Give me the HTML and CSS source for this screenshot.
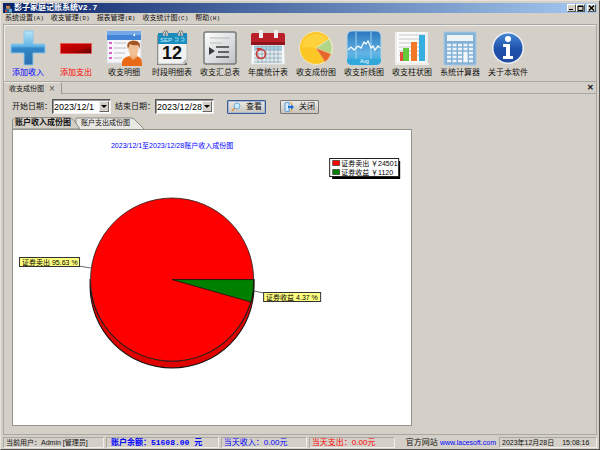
FILE: index.html
```html
<!DOCTYPE html>
<html lang="zh-CN">
<head>
<meta charset="utf-8">
<title>影子家庭记账系统V2.7</title>
<link rel="stylesheet" href="styles.css">
</head>
<body>
<div class="window">
  <header class="titlebar">
    <svg class="app-icon" viewBox="0 0 9 9" aria-hidden="true"><path d="M1 9V5l2-1h3l2 1v4z" fill="#30608c"/><circle cx="4" cy="3" r="2" fill="#d08850"/><path d="M2 2q2-3 5 0z" fill="#342d2b"/><path d="M5 5h3v3H5z" fill="#72a8c8"/><path d="M1 6h2v2H1z" fill="#b83b2a"/></svg>
    <h1>影子家庭记账系统V2.7</h1>
    <div class="window-buttons">
      <button type="button" aria-label="最小化"><svg viewBox="0 0 7 6"><path d="M1 4.500h4" stroke="#000"/></svg></button>
      <button type="button" aria-label="最大化"><svg viewBox="0 0 7 6"><path d="M1 1h5v4.500h-5zM1 1.500h5" fill="none" stroke="#000"/></svg></button>
      <button type="button" class="close" aria-label="关闭窗口"><svg viewBox="0 0 7 6"><path d="M1 .5l5 5M6 .5l-5 5" stroke="#000" stroke-width="1.300"/></svg></button>
    </div>
  </header>
  <nav class="menu">
    <button type="button">系统设置<span>(A)</span></button>
    <button type="button">收支管理<span>(D)</span></button>
    <button type="button">报表管理<span>(B)</span></button>
    <button type="button">收支统计图<span>(C)</span></button>
    <button type="button">帮助<span>(H)</span></button>
  </nav>
  <div class="toolbar">
    <button type="button" class="income">
      <svg viewBox="0 0 36 36"><defs><linearGradient id="blue" x2="0" y2="1"><stop stop-color="#b7e6fa"/><stop offset=".45" stop-color="#62b3e5"/><stop offset=".5" stop-color="#3288c9"/><stop offset="1" stop-color="#2b70ae"/></linearGradient></defs><path d="M14 1h9v13h12v9H23v12h-9V23H1v-9h13z" fill="url(#blue)" stroke="#8bc6e8"/></svg>
      <span>添加收入</span></button>
    <button type="button" class="expense">
      <svg viewBox="0 0 36 36"><defs><linearGradient id="redbar" x2="1" y2="1"><stop stop-color="#d90000"/><stop offset=".6" stop-color="#b00000"/><stop offset="1" stop-color="#500000"/></linearGradient></defs><path d="M2.500 13.500h31v10h-31z" fill="url(#redbar)" stroke="#eb5252" stroke-width=".8"/></svg>
      <span>添加支出</span></button>
    <button type="button">
      <svg viewBox="0 0 36 36"><path d="M1 1h34v32H1z" fill="#f7f7f9" stroke="#d3d8e2"/><path d="M1 1h34v9H1z" fill="#4384d6"/><path d="M1 1h34v4H1z" fill="#72a8e8"/><path d="M27 6l2-3v3z" fill="#fff"/><path d="M3 13h3M3 18h3M3 23h3M3 28h3" stroke="#cb2eba" stroke-width="1.500"/><path d="M8 13h12M8 18h12M8 23h11M8 28h8" stroke="#bcbcca"/><path d="M16 36v-4q1-5 8-6h6q6 1 6 7v3z" fill="#e86a17"/><path d="M24 23v4l3 3 4-3v-4z" fill="#efb27e"/><ellipse cx="27.500" cy="19" rx="5" ry="7" fill="#f2c096"/><path d="M22 19q-3-8 6-8.500 8 .5 5.500 8.500l-1.500-4q-5 1-8-1z" fill="#a45724"/></svg>
      <span>收支明细</span></button>
    <button type="button">
      <svg viewBox="0 0 36 36"><path d="M3 5h30v30H3z" fill="#666"/><path d="M4 4h29v28l-3 2H4z" fill="#f1f1f1" stroke="#bbb"/><path d="M4 3h29v11H4z" fill="#1b8dbd"/><text class="calendar-month" x="6" y="12">SEP</text><path d="M21 8h3v3h-3M27 8h3v3h-3" fill="none" stroke="#79d2ef"/><g fill="none" stroke="#777" stroke-width="2.500"><path d="M10 6V3q2-3 3 0v3M25 6V3q2-3 3 0v3"/></g><g fill="none" stroke="#eee"><path d="M10 6V3q2-3 3 0v3M25 6V3q2-3 3 0v3"/></g><text class="calendar-day" x="18" y="29" text-anchor="middle">12</text><path d="M28 33l5-5-1 5z" fill="#bbb"/></svg>
      <span>时段明细表</span></button>
    <button type="button">
      <svg viewBox="0 0 36 36"><defs><linearGradient id="paper" x2="1" y2="1"><stop stop-color="#fff"/><stop offset="1" stop-color="#bfc2c4"/></linearGradient></defs><rect x="2" y="2" width="32" height="32" rx="2" fill="url(#paper)" stroke="#777a7c" stroke-width="1.500"/><path d="M8 8h20M8 13h12" stroke="#b9b9b9"/><path d="M7 17l6 4-6 4z" fill="#36393b"/><path d="M14 17h13M16 22h11M14 27h13" stroke="#383b3d" stroke-width="1.500"/></svg>
      <span>收支汇总表</span></button>
    <button type="button">
      <svg viewBox="0 0 36 36"><path d="M2 13h32l1 21H1z" fill="#f8fafb" stroke="#ddd"/><path d="M4 17h28v16H4z" fill="#e1eaee"/><path d="M4 16h28v4H4z" fill="#a6d0e4"/><path d="M4 16h28M4 20h28M4 24h28M4 28h28M4 32h28M8 16v17M12 16v17M16 16v17M20 16v17M24 16v17M28 16v17" stroke="#8ba5b2" stroke-width=".7"/><path d="M1 5q0-2 2-2h30q2 0 2 2v10H1z" fill="#b82127"/><path d="M1 12h34v3H1z" fill="#8e151c"/><path d="M9 0h4v8H9zM24 0h4v8h-4z" fill="#eee"/><circle cx="11" cy="24" r="4.500" fill="none" stroke="#c83b36" stroke-width="1.700"/><path d="M6 18l6 0-3 3z" fill="#c83b36"/></svg>
      <span>年度统计表</span></button>
    <button type="button">
      <svg viewBox="0 0 36 36"><circle cx="18" cy="18" r="16.500" fill="#fcc725" stroke="#eee6cc"/><path d="M18 18L31 9q5 7 2 15z" fill="#b1d688" stroke="#e4edcd"/><path d="M18 18l15 6q-2 5-6 8z" fill="#e4662b" stroke="#f2b17d" stroke-width=".7"/><path d="M4 17Q5 5 18 4q7 0 11 4L18 18z" fill="#ffda50" opacity=".55"/></svg>
      <span>收支成份图</span></button>
    <button type="button">
      <svg viewBox="0 0 36 36"><defs><linearGradient id="chartblue" x2="0" y2="1"><stop stop-color="#2977bd"/><stop offset=".65" stop-color="#65b3e4"/><stop offset="1" stop-color="#25a8df"/></linearGradient></defs><rect x="1" y="1" width="34" height="34" rx="5" fill="url(#chartblue)" stroke="#afd8ec"/><path d="M10 2v28M25 2v28" stroke="#9bd5ef"/><path d="M2 20l3-3 3 3 4-4 3 2 3-6 2 2 2-3 3 7 2-2 2 4 3-4 2 2" fill="none" stroke="#fff" stroke-width="1.200"/><path d="M1 29h34v2q-1 4-5 4H6q-5 0-5-4z" fill="#32a7d9"/><text class="chart-month" x="14" y="33">Aug</text></svg>
      <span>收支折线图</span></button>
    <button type="button">
      <svg viewBox="0 0 36 36"><path d="M3 2h30v31H3z" fill="#fafafa"/><path d="M5 5h26M5 9h26M5 13h26M5 17h26M5 21h26M5 25h26" stroke="#c8c8c8"/><path d="M3 2v31h32v2H1V2zM31 2h3v30h-3z" fill="#eee"/><path d="M6 22h4v9H6z" fill="#e34d3c"/><path d="M9 18h6v13H9z" fill="#64c83c"/><path d="M17 12h6v19h-6z" fill="#f27a27"/><path d="M25 5h6v26h-6z" fill="#35afdf"/></svg>
      <span>收支柱状图</span></button>
    <button type="button">
      <svg viewBox="0 0 36 36"><path d="M2 2h32v33H2z" fill="#83b2d8" stroke="#a9c9e2"/><path d="M5 5h26v6H5z" fill="#eef3f6"/><g stroke="#edf3f7" stroke-width="2.500" stroke-dasharray="4 1.500"><path d="M5 15h26M5 19h26M5 23h26M5 27h26M5 31h26"/></g><path d="M21.500 23h4v9h-4z" fill="#f4f7f8"/></svg>
      <span>系统计算器</span></button>
    <button type="button">
      <svg viewBox="0 0 36 36"><defs><linearGradient id="info" x2="0" y2="1"><stop stop-color="#4387d3"/><stop offset=".55" stop-color="#1e50aa"/><stop offset="1" stop-color="#234ca4"/></linearGradient></defs><circle cx="18" cy="18" r="16" fill="#eceff4"/><circle cx="18" cy="18" r="14.500" fill="url(#info)"/><circle cx="18" cy="9" r="3" fill="#fff"/><path d="M13 14h7v12h3v3H13v-3h3v-9h-3z" fill="#fff"/></svg>
      <span>关于本软件</span></button>
  </div>
  <main class="workspace">
    <div class="document-tabs">
      <div class="document-tab">收支成份图 <button type="button" aria-label="关闭页面">×</button></div>
      <button type="button" class="close-all" aria-label="关闭全部">✕</button>
    </div>
    <form class="filters">
      <label for="start">开始日期：</label>
      <span class="combo"><select id="start"><option>2023/12/1</option></select><i><svg viewBox="0 0 8 9"><path d="M1 3h6L4 6z"/></svg></i></span>
      <label for="end">结束日期：</label>
      <span class="combo"><select id="end"><option>2023/12/28</option></select><i><svg viewBox="0 0 8 9"><path d="M1 3h6L4 6z"/></svg></i></span>
      <button type="button" class="action primary"><svg viewBox="0 0 10 10"><path d="M1 9l3-3" stroke="#dc973e" stroke-width="1.600"/><circle cx="6" cy="4" r="3" fill="#c7eafa" stroke="#71a9cc"/></svg>查看</button>
      <button type="button" class="action"><svg viewBox="0 0 10 10"><path d="M1 1l4-1v10L1 9z" fill="#d8ebfc" stroke="#3e88ce" stroke-width=".8"/><path d="M4 4h3V2l3 3-3 3V6H4z" fill="#1f70d2"/><path d="M6 1h2v2M6 9h2V7" fill="none" stroke="#e8ad43"/></svg>关闭</button>
    </form>
    <div class="chart-area">
      <div class="chart-tabs">
        <svg class="tab-shape" viewBox="0 0 134 12" aria-hidden="true"><path d="M64 12V1h55q3 0 5 3l8 8" fill="#e9e8e4" stroke="#8d8b85"/><path d="M.5 12V3L3 .5h54q3 0 5 3l6 8.500z" fill="#d4d0c8" stroke="#8d8b85"/></svg>
        <button type="button" class="selected">账户收入成份图</button><button type="button">账户支出成份图</button>
      </div>
      <section class="chart">
        <svg viewBox="0 0 398 295" role="img" aria-label="账户收入成份图">
          <text class="chart-title" x="159" y="18" text-anchor="middle">2023/12/1至2023/12/28账户收入成份图</text>
          <path d="M77 149A82 82 0 0 0 241 149v7A82 82 0 0 1 77 156z" fill="#df0000" stroke="#111"/>
          <circle cx="159" cy="149.500" r="81.500" fill="#f00" stroke="#222" stroke-width=".8"/>
          <path d="M159 149.500H240.500A81.500 81.500 0 0 1 238 172z" fill="#008000" stroke="#111" stroke-width=".8"/>
          <path d="M66 136l12 2M241 161l10 2" stroke="#444" stroke-width=".8"/>
          <g class="callout"><path d="M6.500 127.500h60v9h-60z"/><text x="9" y="135">证券卖出 95.63 %</text><path d="M250.500 162.500h57v9h-57z"/><text x="253" y="170">证券收益 4.37 %</text></g>
          <path d="M319 31h68v18h-68z"/>
          <path d="M316.500 28.500h69v18h-69z" fill="#fff" stroke="#222"/>
          <path d="M319.500 30.500h7v5h-7z" fill="#f00" stroke="#333" stroke-width=".7"/>
          <path d="M319.500 39.500h7v5h-7z" fill="#008000" stroke="#333" stroke-width=".7"/>
          <g class="legend"><text x="328" y="36">证券卖出 ￥24501</text><text x="328" y="45">证券收益 ￥1120</text></g>
        </svg>
      </section>
    </div>
  </main>
  <footer class="status">
    <span class="user">当前用户：Admin [管理员]</span>
    <span class="balance">账户余额：51608.00 元</span>
    <span class="today in">当天收入：0.00元</span>
    <span class="today out">当天支出：0.00元</span>
    <span class="site">官方网站 <a href="#">www.lacesoft.com</a></span>
    <span class="clock"><time>2023年12月28日</time><time>15:08:16</time></span>
  </footer>
</div>
</body>
</html>
```
FILE: styles.css
```css
* { box-sizing: border-box; }
body {
  margin: 0;
  background: #d4d0c8;
  color: #111;
  font: 7px/10px "Liberation Sans", "Noto Sans CJK SC", sans-serif;
}
button, select { font: inherit; color: inherit; }
button { margin: 0; padding: 0; border: 0; background: none; white-space: nowrap; }
svg { display: block; }
.window {
  min-height: 100vh;
  display: flex;
  flex-direction: column;
  padding: 2px 2px 1px;
  border: 1px solid #e6e3dd;
  border-right-color: #55534f;
  border-bottom-color: #55534f;
}
.titlebar {
  height: 10px;
  display: flex;
  align-items: center;
  background: linear-gradient(90deg, #0a246a, #a6caf0);
  color: #fff;
}
.app-icon { width: 9px; height: 9px; margin: 0 1px; }
.titlebar h1 {
  flex: 1;
  margin: 0;
  font: bold 8px/12px "Liberation Mono", "Noto Sans CJK SC", monospace;
}
.window-buttons { display: flex; padding-right: 1px; }
.window-buttons button {
  width: 9px;
  height: 8px;
  background: #d4d0c8;
  border: 1px solid #fff;
  border-right-color: #555;
  border-bottom-color: #555;
}
.window-buttons .close { margin-left: 2px; }
.menu { height: 11px; display: flex; gap: 7px; padding-left: 2px; }
.menu span { font-family: "Liberation Mono", monospace; font-size: 6px; }
.toolbar {
  height: 58px;
  display: flex;
  border: 1px solid #aaa8a3;
  box-shadow: inset 1px 1px #f0eeea;
}
.toolbar button {
  width: 48px;
  height: 56px;
  display: flex;
  flex-direction: column;
  align-items: center;
  gap: 1px;
  padding-top: 5px;
}
.toolbar svg { width: 36px; height: 36px; }
.toolbar span { font-size: 8px; line-height: 12px; }
.income { color: #00f; }
.expense { color: #f00; }
.calendar-month { font-size: 6px; fill: #c8efff; }
.calendar-day { font-size: 18px; font-weight: bold; fill: #111; }
.chart-month { font-size: 5px; fill: #fff; }
.workspace {
  flex: 1;
  border: 1px solid #aaa8a3;
  border-top: 0;
}
.document-tabs {
  height: 12px;
  display: flex;
  justify-content: space-between;
  border-bottom: 1px solid #aaa8a3;
}
.document-tab {
  height: 12px;
  display: flex;
  align-items: center;
  gap: 4px;
  padding: 0 5px;
  background: #d4d0c8;
  border-right: 1px solid #999791;
  border-top: 1px solid #e9e7e2;
  border-radius: 0 3px 0 0;
}
.document-tab button { width: 8px; font-size: 10px; color: #555; }
.close-all { width: 12px; font-size: 8px; font-weight: bold; }
.filters {
  display: flex;
  align-items: center;
  padding: 5px 0 0 8px;
  font-size: 8px;
}
.filters label { width: 40px; white-space: nowrap; }
.combo { position: relative; width: 59px; height: 15px; margin-right: 4px; }
.combo select {
  width: 100%;
  height: 15px;
  appearance: none;
  padding: 0 10px 0 1px;
  background: #fff;
  border: 1px solid #555;
  border-right-color: #eee;
  border-bottom-color: #eee;
  border-radius: 0;
  outline: 0;
  box-shadow: inset 1px 1px #999;
  color: #000;
  font: 9px/12px "Liberation Sans", sans-serif;
}
.combo i {
  position: absolute;
  right: 2px;
  top: 2px;
  width: 10px;
  height: 11px;
  background: #d4d0c8;
  border: 1px solid #eee;
  border-right-color: #666;
  border-bottom-color: #666;
  pointer-events: none;
}
.action {
  width: 39px;
  height: 14px;
  display: flex;
  align-items: center;
  gap: 5px;
  padding: 0 3px;
  margin-left: 14px;
  background: linear-gradient(#eceae5, #c9c5bd);
  border: 1px solid #777;
  border-radius: 1px;
}
.action.primary { margin-left: 9px; border-color: #385a91; box-shadow: inset 0 0 0 1px #a9b9d5; }
.action svg { width: 10px; height: 10px; }
.chart-area { width: 67.6%; margin: 3px 0 0 8px; }
.chart-tabs { position: relative; height: 12px; display: flex; }
.chart-tabs button { position: relative; height: 12px; padding-left: 4px; width: 65px; text-align: left; }
.chart-tabs .selected { font-size: 8px; font-weight: bold; padding-left: 3px; }
.tab-shape { position: absolute; left: 0; top: 0; width: 134px; height: 12px; }
.chart { background: #fff; border: 1px solid #96938c; }
.chart svg { width: 100%; height: auto; }
.chart-title { font-size: 7px; fill: #00f; }
.callout { font-size: 7px; }
.callout path { fill: #ffff80; stroke: #333; }
.legend { font-size: 7px; }
.status {
  height: 13px;
  display: flex;
  align-items: center;
  gap: 2px;
  padding-top: 1px;
  white-space: nowrap;
}
.status > span {
  height: 11px;
  padding-left: 2px;
  border: 1px solid #aaa8a3;
  border-right-color: #f1efeb;
  border-bottom-color: #f1efeb;
}
.status .user { width: 17%; }
.status .balance {
  width: 19%;
  padding-left: 4px;
  color: #00f;
  font: bold 8px/10px "Liberation Mono", "Noto Sans CJK SC", monospace;
}
.status .today { width: 86px; font-size: 8px; }
.status .in { color: #00f; }
.status .out { color: #f00; }
.status .site { flex: 1; border-color: transparent; text-align: right; font-size: 8px; }
.status a { color: #00f; font-size: 7px; text-decoration: none; }
.status .clock { width: 98px; display: flex; gap: 8px; }
```
